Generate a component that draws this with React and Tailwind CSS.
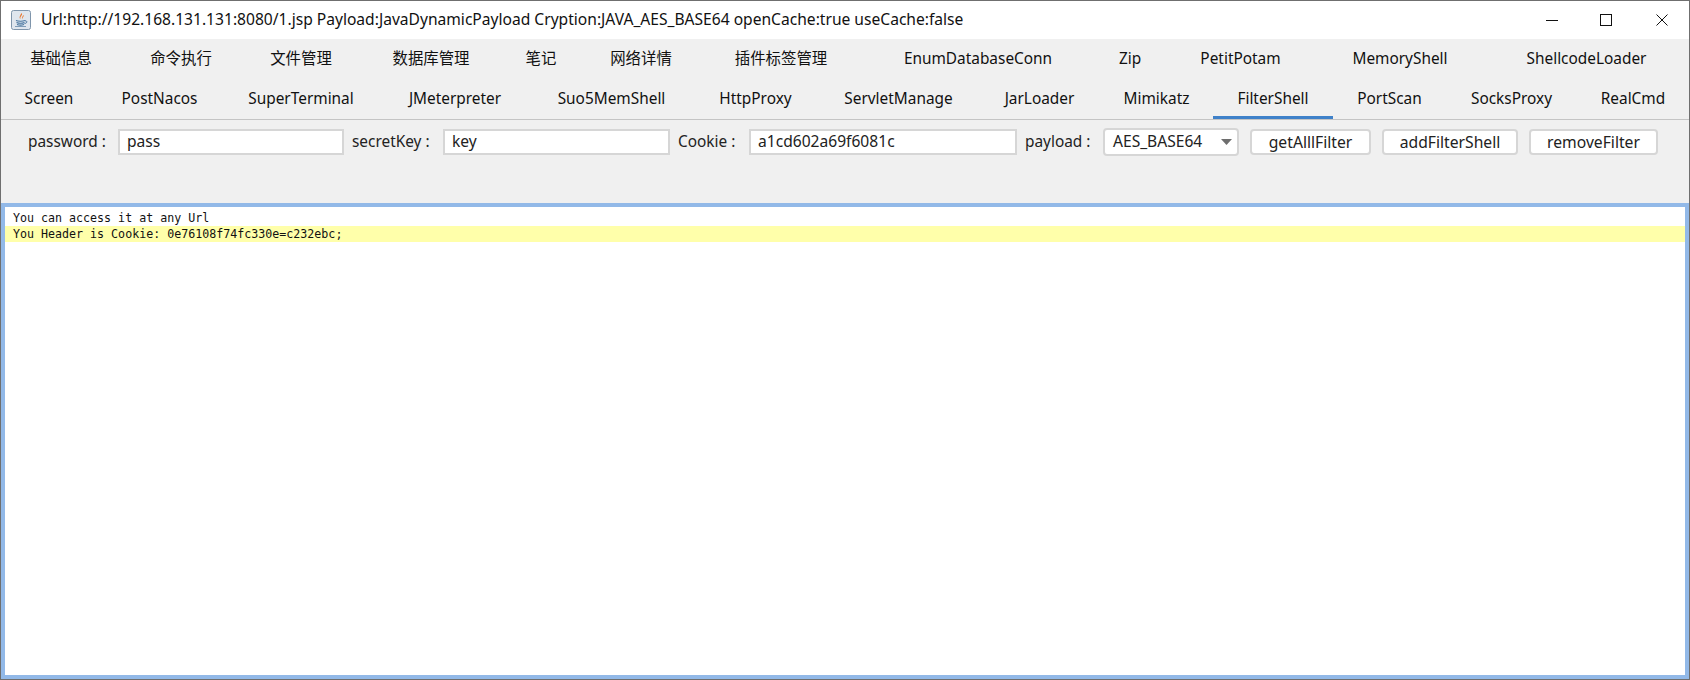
import React from 'react';

const uiFont = 'font-["Noto_Sans","Noto_Sans_CJK_SC",sans-serif]';

const topTabs = [
  ['基础信息', 'w-[120px]'],
  ['命令执行', 'w-[120px]'],
  ['文件管理', 'w-[120px]'],
  ['数据库管理', 'w-[140px]'],
  ['笔记', 'w-[80px]'],
  ['网络详情', 'w-[120px]'],
  ['插件标签管理', 'w-[160px]'],
  ['EnumDatabaseConn', 'w-[234px]'],
  ['Zip', 'w-[70px]'],
  ['PetitPotam', 'w-[151px]'],
  ['MemoryShell', 'w-[168px]'],
  ['ShellcodeLoader', 'w-[205px]'],
];

const bottomTabs = [
  ['Screen', 'w-[96px]'],
  ['PostNacos', 'w-[125px]'],
  ['SuperTerminal', 'w-[158px]'],
  ['JMeterpreter', 'w-[150px]'],
  ['Suo5MemShell', 'w-[163px]'],
  ['HttpProxy', 'w-[125px]'],
  ['ServletManage', 'w-[161px]'],
  ['JarLoader', 'w-[121px]'],
  ['Mimikatz', 'w-[113px]'],
  ['FilterShell', 'w-[120px]'],
  ['PortScan', 'w-[113px]'],
  ['SocksProxy', 'w-[131px]'],
  ['RealCmd', 'w-[112px]'],
];

// java coffee cup window icon
const JavaIcon = () => (
  <svg width="20" height="20" viewBox="0 0 20 20">
    <rect x="0.5" y="0.5" width="19" height="19" rx="2" fill="#dfe6ee" stroke="#7f95ab" />
    <path d="M10.5 3 C12.5 5 8.5 6.5 9.5 9 C7.5 7.5 9.5 5 10.5 3 Z M12.5 5 C13.5 6.5 11 7.5 11.5 9.2 C10.2 8 11.5 6.5 12.5 5 Z" fill="#e8762c" />
    <path d="M5 10.5 C7 11.5 12 11.5 14 10.5 M5.5 12.5 C7.5 13.3 11.5 13.3 13.5 12.5 M6 14.5 C8 15.2 11 15.2 13 14.5" fill="none" stroke="#46749e" strokeWidth="1.1" />
    <path d="M14 10.8 C16.5 10.5 16.5 13.2 13.5 13.6" fill="none" stroke="#46749e" strokeWidth="1" />
    <path d="M4 16.5 H15" stroke="#7f9cb8" strokeWidth="1" />
  </svg>
);

const TitleBar = () => (
  <div className="flex h-[38px] bg-white items-center">
    <div className="ml-[10px] w-[20px] h-[20px] flex">
      <JavaIcon />
    </div>
    <div className={`ml-[10px] flex-1 text-[15.6px] text-[#111] whitespace-nowrap ${uiFont}`}>
      Url:http://192.168.131.131:8080/1.jsp Payload:JavaDynamicPayload Cryption:JAVA_AES_BASE64 openCache:true useCache:false
    </div>
    <div className="w-[55px] h-full flex items-center justify-center">
      <svg width="14" height="14" viewBox="0 0 14 14">
        <path d="M1 7.5 H13" stroke="#111" strokeWidth="1" />
      </svg>
    </div>
    <div className="w-[55px] h-full flex items-center justify-center pr-[2px]">
      <svg width="14" height="14" viewBox="0 0 14 14">
        <rect x="1.5" y="1.5" width="11" height="11" fill="none" stroke="#111" strokeWidth="1" />
      </svg>
    </div>
    <div className="w-[55px] h-full flex items-center justify-center">
      <svg width="14" height="14" viewBox="0 0 14 14">
        <path d="M1.5 1.5 L12.5 12.5 M12.5 1.5 L1.5 12.5" stroke="#111" strokeWidth="1" />
      </svg>
    </div>
  </div>
);

const TabRow = ({ tabs, active }) => (
  <div className="flex h-[40px]">
    {tabs.map(([label, width]) => (
      <div
        key={label}
        className={`${width} flex items-center justify-center border-y-[3px] border-t-transparent pb-[1px] text-[15.4px] text-[#111] whitespace-nowrap ${
          label === active ? 'border-b-[#3f81c9]' : 'border-b-transparent'
        }`}
      >
        {label}
      </div>
    ))}
  </div>
);

const Field = ({ label, labelWidth, value, inputWidth }) => (
  <>
    <div className={`${labelWidth} pb-[1px] text-[15.4px] text-[#222] whitespace-nowrap`}>{label}</div>
    <input
      readOnly
      value={value}
      className={`${inputWidth} h-[26px] bg-white border-2 border-[#d6d6d6] pl-[7px] pb-[2px] text-[15.6px] text-[#222] outline-none ${uiFont}`}
    />
  </>
);

const Btn = ({ children, width }) => (
  <button className={`${width} h-[26px] ml-[11px] pb-[2px] bg-white border-2 border-[#d6d6d6] rounded-[4px] text-[15.7px] text-[#222] ${uiFont}`}>
    {children}
  </button>
);

export default function App() {
  return (
    <div className={`w-[1690px] h-[680px] flex flex-col overflow-hidden bg-[#f0f0f0] border border-[#6f6f6f] ${uiFont}`}>
      <TitleBar />

      {/* Tabs */}
      <div className="border-b border-[#c4c4c4]">
        <TabRow tabs={topTabs} />
        <TabRow tabs={bottomTabs} active="FilterShell" />
      </div>

      {/* Form */}
      <div className="h-[83px] pt-[8px] pl-[27px] flex items-start">
        <div className="flex items-center">
          <Field label="password :" labelWidth="w-[90px]" value="pass" inputWidth="w-[226px]" />
          <div className="w-[8px]" />
          <Field label="secretKey :" labelWidth="w-[91px]" value="key" inputWidth="w-[227px]" />
          <div className="w-[8px]" />
          <Field label="Cookie :" labelWidth="w-[71px]" value="a1cd602a69f6081c" inputWidth="w-[268px]" />
          <div className="w-[8px]" />
          <div className="w-[78px] pb-[1px] text-[15.4px] text-[#222]">payload :</div>
          <div className="w-[136px] h-[28px] pb-[1px] bg-white border-2 border-[#d6d6d6] rounded-[4px] flex items-center justify-between pl-[8px] pr-[5px] text-[15.6px] text-[#222]">
            <span>AES_BASE64</span>
            <svg width="11" height="6" viewBox="0 0 11 6" className="mt-[1px]">
              <path d="M0 0 H11 L5.5 6 Z" fill="#6e6e6e" />
            </svg>
          </div>
          <Btn width="w-[121px]">getAlllFilter</Btn>
          <Btn width="w-[136px]">addFilterShell</Btn>
          <Btn width="w-[129px]">removeFilter</Btn>
        </div>
      </div>

      {/* Output */}
      <div className="flex-1 bg-white border-4 border-[#92b9e8] pt-[3px] font-['DejaVu_Sans_Mono',monospace] text-[11.65px] leading-[16px] text-[#111]">
        <div className="pl-[8px] h-[16px] whitespace-pre">You can access it at any Url</div>
        <div className="pl-[8px] h-[16px] bg-[#ffffaa] whitespace-pre">You Header is Cookie: 0e76108f74fc330e=c232ebc;</div>
      </div>
    </div>
  );
}
